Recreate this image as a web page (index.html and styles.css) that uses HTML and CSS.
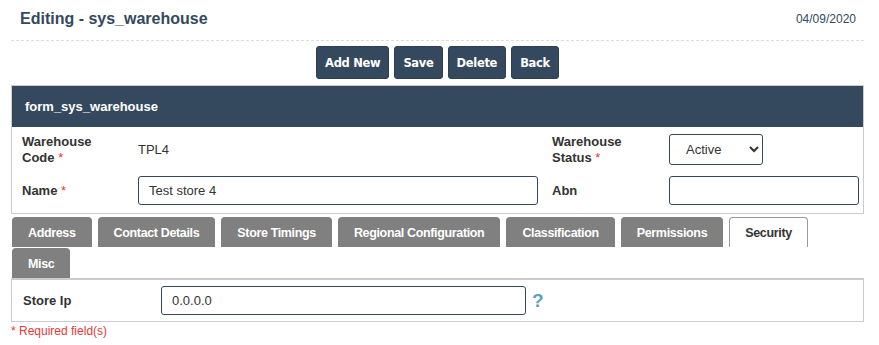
FILE: index.html
```html
<!DOCTYPE html>
<html lang="en">
<head>
  <meta charset="UTF-8" />
  <title>Editing - sys_warehouse</title>
  <link rel="stylesheet" href="styles.css">
</head>
<body>
  <div class="page">
    <div class="page-header">
      <h1>Editing - sys_warehouse</h1>
      <span class="date">04/09/2020</span>
    </div>

    <div class="actions">
      <button class="btn">Add New</button>
      <button class="btn">Save</button>
      <button class="btn">Delete</button>
      <button class="btn">Back</button>
    </div>

    <div class="panel">
      <div class="panel-title">form_sys_warehouse</div>
      <div class="form-grid">
        <label class="lbl">Warehouse<br>Code <span class="req">*</span></label>
        <div class="value">TPL4</div>
        <label class="lbl">Warehouse<br>Status <span class="req">*</span></label>
        <div>
          <select class="select">
            <option>Active</option>
          </select>
        </div>

        <label class="lbl">Name <span class="req">*</span></label>
        <div><input class="input input-name" type="text" value="Test store 4"></div>
        <label class="lbl">Abn</label>
        <div><input class="input input-abn" type="text" value=""></div>
      </div>
    </div>

    <div class="tabs">
      <div class="tab">Address</div>
      <div class="tab">Contact Details</div>
      <div class="tab">Store Timings</div>
      <div class="tab">Regional Configuration</div>
      <div class="tab">Classification</div>
      <div class="tab">Permissions</div>
      <div class="tab active">Security</div>
      <div class="tab">Misc</div>
    </div>

    <div class="tab-body">
      <label class="lbl ip-label">Store Ip</label>
      <input class="input input-ip" type="text" value="0.0.0.0">
      <span class="help">?</span>
    </div>

    <div class="required-note">* Required field(s)</div>
  </div>
</body>
</html>
```

FILE: styles.css
```css
* {
  box-sizing: border-box;
}

body {
  margin: 0;
  font-family: 'Liberation Sans', Arial, sans-serif;
  color: #333;
  background: #fff;
}

.page {
  padding: 0 15px 0 11px;
}

.page-header {
  display: flex;
  justify-content: space-between;
  align-items: center;
  height: 41px;
  padding: 0 8px 2px 9px;
  border-bottom: 1px dashed #ddd;
}

.page-header h1 {
  margin: 0;
  font-size: 16px;
  font-weight: bold;
  color: #34495e;
}

.date {
  font-size: 12px;
  color: #34495e;
}

.actions {
  display: flex;
  justify-content: center;
  gap: 5px;
  margin-top: 5px;
}

.btn {
  height: 33px;
  padding: 0 8px;
  font-family: 'DejaVu Sans', sans-serif;
  font-size: 11.5px;
  font-weight: bold;
  color: #fff;
  background: #34495e;
  border: 1px solid #2c3e50;
  border-radius: 3px;
  cursor: pointer;
  letter-spacing: -0.3px;
}

.panel {
  margin-top: 6px;
  border: 1px solid #ccc;
}

.panel-title {
  height: 41px;
  display: flex;
  align-items: center;
  padding-left: 13px;
  background: #34495e;
  color: #fff;
  font-size: 13px;
  font-weight: bold;
}

.form-grid {
  display: grid;
  grid-template-columns: 116px 414px 117px 1fr;
  grid-auto-rows: 41px;
  align-items: center;
  padding: 2px 5px 2px 10px;
}

.lbl {
  font-size: 13px;
  font-weight: bold;
  color: #333;
  line-height: 16px;
  padding-right: 16px;
}

.req {
  color: #e53935;
  font-weight: normal;
}

.value {
  font-size: 13px;
  color: #333;
}

.input,
.select {
  height: 29px;
  border: 1px solid #34495e;
  border-radius: 3px;
  font-family: 'Liberation Sans', Arial, sans-serif;
  font-size: 13px;
  color: #333;
  padding: 0 10px;
  background: #fff;
}

.select {
  width: 94px;
  height: 31px;
  padding: 0 6px 0 12px;
}

.input-name {
  width: 400px;
}

.input-abn {
  width: 190px;
}

.tabs {
  display: flex;
  flex-wrap: wrap;
  gap: 1px 6px;
  margin-top: 3px;
  padding-left: 1px;
}

.tab {
  height: 30px;
  padding: 0 15px;
  display: flex;
  align-items: center;
  background: #808080;
  color: #fff;
  font-size: 12.5px;
  font-weight: bold;
  border-radius: 4px 4px 0 0;
  border: 1px solid #808080;
  border-bottom: none;
  letter-spacing: -0.35px;
}

.tab.active {
  background: #fff;
  color: #333;
  border-color: #999;
}

.tab-body {
  height: 44px;
  display: flex;
  align-items: center;
  border: 1px solid #ccc;
  border-top: 2px solid #ccc;
  padding-left: 11px;
}

.ip-label {
  width: 138px;
}

.input-ip {
  width: 365px;
  height: 29px;
}

.help {
  margin-left: 6px;
  color: #5aa2bd;
  font-size: 19px;
  font-weight: bold;
}

.required-note {
  margin-top: 2px;
  font-size: 12px;
  color: #e53935;
}
```
